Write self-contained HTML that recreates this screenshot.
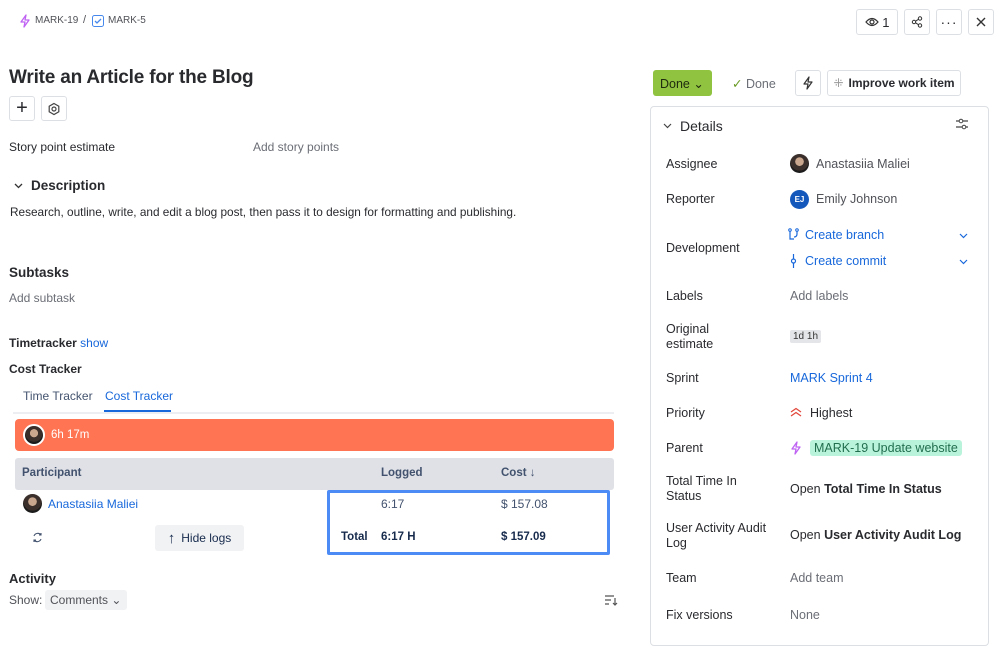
<!DOCTYPE html>
<html><head><meta charset="utf-8"><style>
*{box-sizing:border-box;margin:0;padding:0}
body{width:999px;height:626px;overflow:hidden;background:#fff;font-family:"Liberation Sans",sans-serif;color:#292a2e;position:relative;font-size:12.5px}
.a{position:absolute;white-space:nowrap}
.btn{position:absolute;border:1px solid #dcdfe4;border-radius:3px;background:#fff;display:flex;align-items:center;justify-content:center}
.lbl{position:absolute;left:666px;font-size:12.5px;color:#292a2e;line-height:15px}
.val{position:absolute;left:790px;font-size:12.5px;color:#505258}
.blue{color:#1868db}
.av{border-radius:50%;background:radial-gradient(circle at 50% 40%,#c9a68e 0 28%,#3a2f2a 30% 60%,#1b1b1b 62%);display:inline-block}
</style></head><body>

<svg class="a" style="left:19px;top:14px" width="12" height="14" viewBox="0 0 12 14"><path d="M7 1 L2 8 H6 L5 13 L10 6 H6 Z" fill="none" stroke="#bf63f3" stroke-width="1.3" stroke-linejoin="round"/></svg>
<div class="a" style="left:35px;top:15px;font-size:10px;color:#505258">MARK-19</div>
<div class="a" style="left:83px;top:14px;font-size:11px;color:#505258">/</div>
<svg class="a" style="left:92px;top:15px" width="12" height="12"><rect x=".5" y=".5" width="11" height="11" rx="2" fill="#fff" stroke="#4688ec"/><path d="M3 6 L5 8 L9 4" stroke="#4688ec" fill="none" stroke-width="1.3"/></svg>
<div class="a" style="left:108px;top:15px;font-size:10px;color:#505258">MARK-5</div>

<div class="btn" style="left:856px;top:9px;width:42px;height:26px;font-size:13px"><svg width="14" height="10" viewBox="0 0 14 10"><path d="M1 5 Q7 -2 13 5 Q7 12 1 5Z" fill="none" stroke="#333" stroke-width="1.2"/><circle cx="7" cy="5" r="2" fill="none" stroke="#333" stroke-width="1.2"/></svg>&nbsp;1</div>
<div class="btn" style="left:904px;top:9px;width:26px;height:26px"><svg width="12" height="12"><circle cx="3" cy="6" r="1.7" fill="none" stroke="#333"/><circle cx="9" cy="2.5" r="1.7" fill="none" stroke="#333"/><circle cx="9" cy="9.5" r="1.7" fill="none" stroke="#333"/><path d="M4.5 5.2L7.5 3.3M4.5 6.8L7.5 8.7" stroke="#333"/></svg></div>
<div class="btn" style="left:936px;top:9px;width:26px;height:26px;font-size:14px;letter-spacing:1px">···</div>
<div class="btn" style="left:968px;top:9px;width:26px;height:26px"><svg width="10" height="10"><path d="M1 1L9 9M9 1L1 9" stroke="#333" stroke-width="1.4"/></svg></div>

<div class="a" style="left:9px;top:67px;font-size:19px;font-weight:bold;color:#292a2e;letter-spacing:-0.2px">Write an Article for the Blog</div>
<div class="btn" style="left:9px;top:96px;width:26px;height:25px;font-size:20px;font-weight:300">+</div>
<div class="btn" style="left:41px;top:96px;width:26px;height:25px"><svg width="14" height="14"><path d="M7 1.5L11.8 4.2V9.8L7 12.5L2.2 9.8V4.2Z" fill="none" stroke="#444" stroke-width="1.2"/><circle cx="7" cy="7" r="2" fill="none" stroke="#444" stroke-width="1.2"/></svg></div>

<div class="a" style="left:9px;top:140px;font-size:12px">Story point estimate</div>
<div class="a" style="left:253px;top:140px;font-size:12px;color:#6b6e76">Add story points</div>

<svg class="a" style="left:14px;top:183px" width="9" height="6"><path d="M1 1L4.5 4.5L8 1" stroke="#333" fill="none" stroke-width="1.3"/></svg>
<div class="a" style="left:31px;top:178px;font-size:13.5px;font-weight:bold">Description</div>
<div class="a" style="left:10px;top:205px;font-size:11.8px">Research, outline, write, and edit a blog post, then pass it to design for formatting and publishing.</div>

<div class="a" style="left:9px;top:265px;font-size:13.5px;font-weight:bold">Subtasks</div>
<div class="a" style="left:9px;top:291px;font-size:12px;color:#6b6e76">Add subtask</div>

<div class="a" style="left:9px;top:336px;font-size:12px;font-weight:bold">Timetracker <span class="blue" style="font-weight:normal">show</span></div>
<div class="a" style="left:9px;top:362px;font-size:12px;font-weight:bold">Cost Tracker</div>

<div class="a" style="left:23px;top:389px;font-size:12px;color:#44546f">Time Tracker</div>
<div class="a" style="left:105px;top:389px;font-size:12px;color:#1868db">Cost Tracker</div>
<div class="a" style="left:104px;top:410px;width:67px;height:2px;background:#1868db"></div>
<div class="a" style="left:13px;top:412px;width:601px;height:2px;background:#eceef1"></div>

<div class="a" style="left:15px;top:419px;width:599px;height:32px;background:#ff7452;border-radius:4px"></div>
<span class="a av" style="left:23px;top:424px;width:22px;height:22px;border:2px solid #fff"></span>
<div class="a" style="left:51px;top:429px;font-size:11.5px;color:#fff">6h 17m</div>

<div class="a" style="left:15px;top:458px;width:599px;height:32px;background:#dfe1e6;border-radius:3px"></div>
<div class="a" style="left:22px;top:467px;font-size:11.5px;font-weight:bold;color:#42526e">Participant</div>
<div class="a" style="left:381px;top:467px;font-size:11.5px;font-weight:bold;color:#42526e">Logged</div>
<div class="a" style="left:501px;top:467px;font-size:11.5px;font-weight:bold;color:#42526e">Cost ↓</div>

<div class="a" style="left:327px;top:490px;width:283px;height:65px;border:3px solid #4c8bf5;border-radius:2px"></div>
<span class="a av" style="left:23px;top:494px;width:19px;height:19px"></span>
<div class="a" style="left:48px;top:497px;font-size:12px;color:#1868db">Anastasiia Maliei</div>
<div class="a" style="left:381px;top:497px;font-size:12px;color:#42526e">6:17</div>
<div class="a" style="left:501px;top:497px;font-size:12px;color:#42526e">$ 157.08</div>
<svg class="a" style="left:32px;top:532px" width="11" height="11"><path d="M2 4A4 4 0 0 1 9 3M9 7A4 4 0 0 1 2 8M9 1V3H7M2 10V8H4" stroke="#42526e" fill="none" stroke-width="1.1"/></svg>
<div class="a" style="left:155px;top:525px;width:89px;height:26px;background:#f1f2f4;border-radius:3px;font-size:12px;color:#172b4d;display:flex;align-items:center;justify-content:center"><b style="font-size:15px;margin-right:6px">↑</b>Hide logs</div>
<div class="a" style="left:341px;top:531px;font-size:11.5px;font-weight:bold;color:#172b4d">Total</div>
<div class="a" style="left:381px;top:531px;font-size:11.5px;font-weight:bold;color:#172b4d">6:17 H</div>
<div class="a" style="left:501px;top:531px;font-size:11.5px;font-weight:bold;color:#172b4d">$ 157.09</div>

<div class="a" style="left:9px;top:571px;font-size:13px;font-weight:bold">Activity</div>
<div class="a" style="left:9px;top:593px;font-size:12px;color:#505258">Show:</div>
<div class="a" style="left:45px;top:590px;width:82px;height:20px;background:#f1f2f4;border-radius:3px;font-size:12px;color:#505258;padding:3px 5px">Comments ⌄</div>
<svg class="a" style="left:604px;top:594px" width="14" height="12"><path d="M1 2H10M1 6H7M1 10H5M11 4V11M9 9L11 11L13 9" stroke="#555" fill="none" stroke-width="1.2"/></svg>

<div class="a" style="left:653px;top:70px;width:59px;height:26px;background:#8fc340;border-radius:3px;font-size:12.5px;color:#1f2a0e;padding:6px 7px">Done ⌄</div>
<div class="a" style="left:732px;top:76px;font-size:12.5px;color:#6b6e76"><span style="color:#6a9a23">✓</span> Done</div>
<div class="btn" style="left:795px;top:70px;width:26px;height:26px"><svg width="12" height="14" viewBox="0 0 12 14"><path d="M7 1L2 8H6L5 13L10 6H6Z" fill="none" stroke="#333" stroke-width="1.2" stroke-linejoin="round"/></svg></div>
<div class="btn" style="left:827px;top:70px;width:134px;height:26px;font-size:12px;font-weight:bold;color:#292a2e"><span style="color:#999;font-weight:normal;margin-right:5px">⁜</span>Improve work item</div>

<div class="a" style="left:650px;top:106px;width:339px;height:540px;border:1px solid #dcdfe4;border-radius:4px"></div>
<svg class="a" style="left:663px;top:123px" width="9" height="6"><path d="M1 1L4.5 4.5L8 1" stroke="#444" fill="none" stroke-width="1.2"/></svg>
<div class="a" style="left:680px;top:118px;font-size:14px;color:#292a2e">Details</div>
<svg class="a" style="left:955px;top:118px" width="14" height="12"><path d="M1 3H13M1 9H13" stroke="#444" stroke-width="1.2"/><circle cx="6" cy="3" r="1.8" fill="#fff" stroke="#444"/><circle cx="9" cy="9" r="1.8" fill="#fff" stroke="#444"/></svg>

<div class="lbl" style="top:157px">Assignee</div>
<span class="a av" style="left:790px;top:154px;width:19px;height:19px"></span>
<div class="val" style="left:816px;top:157px">Anastasiia Maliei</div>
<div class="lbl" style="top:192px">Reporter</div>
<div class="a" style="left:790px;top:190px;width:19px;height:19px;border-radius:50%;background:#1558bc;color:#fff;font-size:8px;font-weight:bold;text-align:center;line-height:19px">EJ</div>
<div class="val" style="left:816px;top:192px">Emily Johnson</div>
<div class="lbl" style="top:241px">Development</div>
<svg class="a" style="left:788px;top:228px" width="11" height="13"><circle cx="2" cy="2" r="1.3" fill="none" stroke="#1868db"/><circle cx="9" cy="2" r="1.3" fill="none" stroke="#1868db"/><path d="M2 3.5V11H6M9 3.5V6Q9 9 6 9" stroke="#1868db" fill="none" stroke-width="1.2"/></svg>
<div class="val blue" style="left:805px;top:228px">Create branch</div>
<svg class="a" style="left:790px;top:254px" width="7" height="14"><path d="M3.5 0V5M3.5 9V14" stroke="#1868db" stroke-width="1.2"/><circle cx="3.5" cy="7" r="2" fill="none" stroke="#1868db" stroke-width="1.2"/></svg>
<div class="val blue" style="left:805px;top:254px">Create commit</div>
<svg class="a" style="left:959px;top:233px" width="9" height="6"><path d="M1 1L4.5 4.5L8 1" stroke="#1868db" fill="none" stroke-width="1.2"/></svg>
<svg class="a" style="left:959px;top:259px" width="9" height="6"><path d="M1 1L4.5 4.5L8 1" stroke="#1868db" fill="none" stroke-width="1.2"/></svg>
<div class="lbl" style="top:289px">Labels</div>
<div class="val" style="top:289px;color:#6b6e76">Add labels</div>
<div class="lbl" style="top:322px">Original<br>estimate</div>
<div class="a" style="left:790px;top:330px;background:#e4e5e8;border-radius:2px;font-size:10px;padding:1px 3px;color:#333">1d 1h</div>
<div class="lbl" style="top:371px">Sprint</div>
<div class="val blue" style="top:371px">MARK Sprint 4</div>
<div class="lbl" style="top:406px">Priority</div>
<svg class="a" style="left:790px;top:407px" width="12" height="10"><path d="M1 5L6 1.5L11 5M1 9L6 5.5L11 9" stroke="#e2483d" fill="none" stroke-width="1.3"/></svg>
<div class="val" style="left:810px;top:406px;color:#292a2e">Highest</div>
<div class="lbl" style="top:441px">Parent</div>
<svg class="a" style="left:790px;top:441px" width="12" height="14" viewBox="0 0 12 14"><path d="M7 1L2 8H6L5 13L10 6H6Z" fill="none" stroke="#bf63f3" stroke-width="1.3" stroke-linejoin="round"/></svg>
<div class="a" style="left:810px;top:440px;background:#baf3db;border-radius:3px;padding:1px 4px;font-size:12.5px;color:#216e4e">MARK-19 Update website</div>
<div class="lbl" style="top:474px">Total Time In<br>Status</div>
<div class="val" style="top:482px;color:#292a2e">Open <b>Total Time In Status</b></div>
<div class="lbl" style="top:521px">User Activity Audit<br>Log</div>
<div class="val" style="top:528px;color:#292a2e">Open <b>User Activity Audit Log</b></div>
<div class="lbl" style="top:571px">Team</div>
<div class="val" style="top:571px;color:#6b6e76">Add team</div>
<div class="lbl" style="top:608px">Fix versions</div>
<div class="val" style="top:608px;color:#6b6e76">None</div>
</body></html>
